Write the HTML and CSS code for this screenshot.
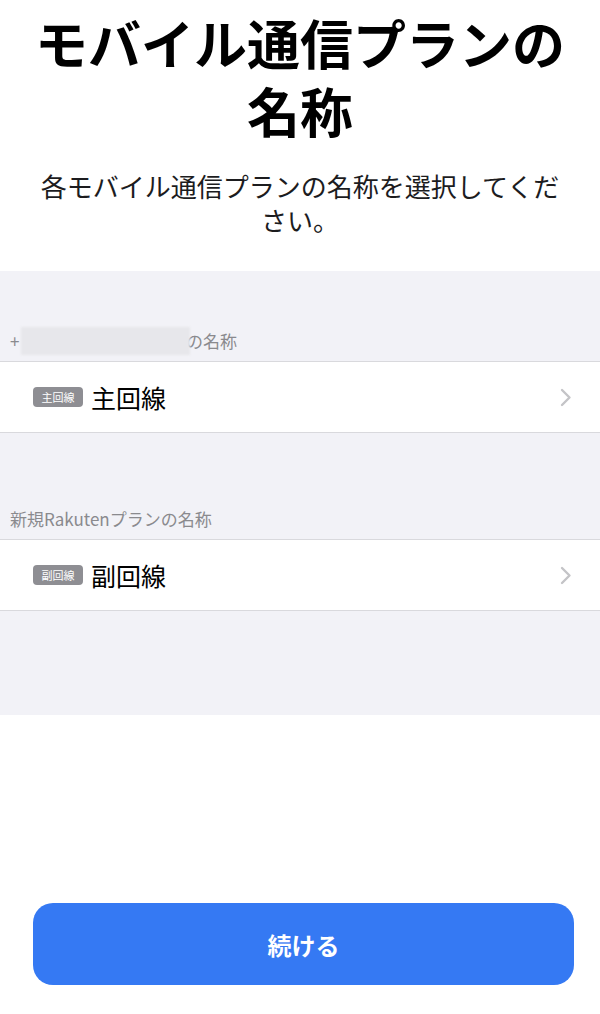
FILE: index.html
```html
<!DOCTYPE html>
<html lang="ja">
<head>
<meta charset="utf-8">
<link rel="stylesheet" href="styles.css">
</head>
<body>
<div class="page">
  <h1 class="title">モバイル通信プランの名称</h1>
  <p class="subtitle">各モバイル通信プランの名称を選択してください。</p>
  <div class="group">
    <div class="section-header first"><span class="plus">+</span><span class="masked"></span><span>の名称</span></div>
    <div class="row">
      <span class="badge">主回線</span>
      <span class="label">主回線</span>
      <svg class="chev" width="12" height="19" viewBox="0 0 12 19"><path d="M2 2 L9.5 9.5 L2 17" fill="none" stroke="#c4c4c7" stroke-width="2.4" stroke-linecap="round" stroke-linejoin="round"/></svg>
    </div>
    <div class="section-header second">新規Rakutenプランの名称</div>
    <div class="row">
      <span class="badge">副回線</span>
      <span class="label">副回線</span>
      <svg class="chev" width="12" height="19" viewBox="0 0 12 19"><path d="M2 2 L9.5 9.5 L2 17" fill="none" stroke="#c4c4c7" stroke-width="2.4" stroke-linecap="round" stroke-linejoin="round"/></svg>
    </div>
    <div class="group-bottom"></div>
  </div>
  <div class="actions">
    <button class="primary">続ける</button>
  </div>
</div>
</body>
</html>
```

FILE: styles.css
```css
html, body {
  margin: 0;
  padding: 0;
  background: #ffffff;
}
body {
  font-family: "Noto Sans CJK JP", "Noto Sans", sans-serif;
  color: #000;
  width: 600px;
}
.page {
  display: flex;
  flex-direction: column;
}
.title {
  margin: 0;
  padding: 8px 18px 0;
  font-size: 53px;
  line-height: 68px;
  font-weight: 700;
  text-align: center;
  letter-spacing: 0;
}
.subtitle {
  margin: 25px 0 0;
  padding: 0 36px;
  font-size: 26px;
  line-height: 34px;
  text-align: center;
  color: #1c1c1e;
}
.group {
  margin-top: 34px;
  background: #f2f2f7;
  display: flex;
  flex-direction: column;
}
.section-header {
  height: 20px;
  padding: 0 10px 10px;
  font-size: 17px;
  line-height: 20px;
  color: #8a8a8e;
  display: flex;
  align-items: center;
}
.section-header.first {
  padding-top: 60px;
}
.section-header.second {
  padding-top: 76px;
}
.plus {
  width: 11px;
  color: #8a8a8e;
}
.masked {
  display: inline-block;
  flex: none;
  width: 169px;
  height: 28px;
  margin: -4px -4px -4px 0;
  background: #e7e7eb;
  filter: blur(1px);
  position: relative;
  z-index: 1;
}
.row {
  height: 70px;
  background: #ffffff;
  border-top: 1px solid #d9d9dd;
  border-bottom: 1px solid #d9d9dd;
  display: flex;
  align-items: center;
  padding: 0 28px 0 33px;
}
.badge {
  display: inline-flex;
  align-items: center;
  justify-content: center;
  width: 50px;
  height: 20px;
  border-radius: 4px;
  background: #8e8e93;
  color: #ffffff;
  font-size: 11px;
  line-height: 20px;
}
.label {
  margin-left: 8px;
  font-size: 25px;
  line-height: 30px;
  flex: 1;
}
.chev {
  display: block;
}
.group-bottom {
  height: 104px;
}
.actions {
  padding: 188px 26px 0 33px;
}
.primary {
  display: block;
  width: 541px;
  height: 82px;
  border: none;
  border-radius: 20px;
  background: #3579f3;
  color: #ffffff;
  font-family: "Noto Sans CJK JP", "Noto Sans", sans-serif;
  font-size: 24px;
  font-weight: 700;
  padding: 0;
}
```
